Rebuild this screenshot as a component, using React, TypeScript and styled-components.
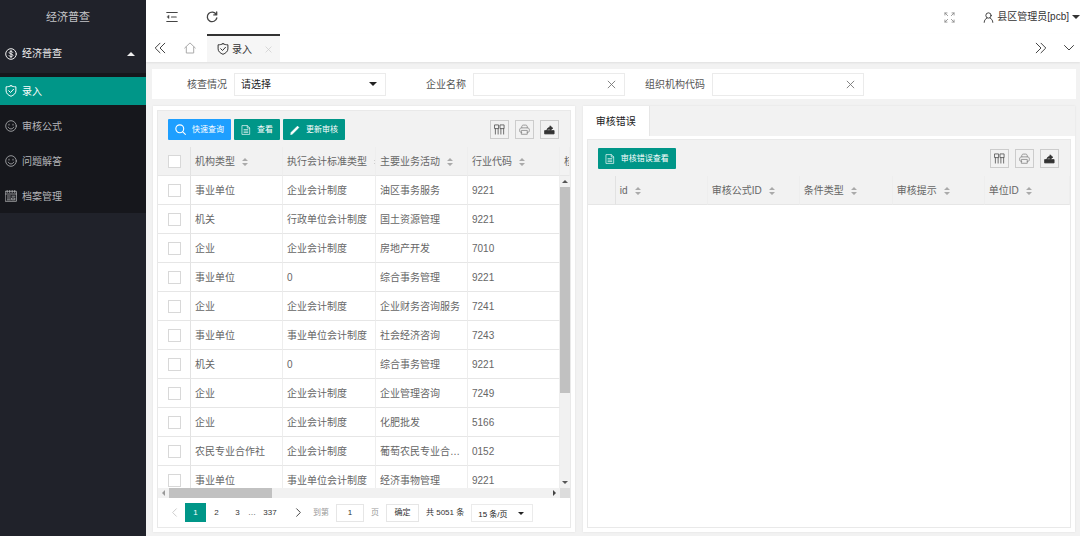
import React from "react";
import styled, { createGlobalStyle, css } from "styled-components";

const GlobalStyle = createGlobalStyle`
  * { box-sizing: border-box; }
  body {
    margin: 0;
    background: #f2f2f2;
    color: #555;
    font: 10px/16px "Liberation Sans", "Noto Sans CJK SC", sans-serif;
  }
  a { color: inherit; text-decoration: none; }
  button, input, select { font: inherit; color: inherit; margin: 0; padding: 0; border: 0; background: none; border-radius: 0; }
  svg { display: block; flex: none; }
`;

/* ---------- icons ---------- */

type IconProps = { size?: number; color?: string; width?: number; children?: React.ReactNode };

const Icon = ({ size = 12, color = "currentColor", width = 1, children }: IconProps) => (
  <svg width={size} height={size} viewBox="0 0 12 12" fill="none" stroke={color} strokeWidth={width} strokeLinecap="round" strokeLinejoin="round" aria-hidden="true">
    {children}
  </svg>
);

const DollarIcon = () => (
  <Icon>
    <circle cx="6" cy="6" r="5.3" />
    <path d="M7.8 4.4C7.5 3.7 6.9 3.4 6 3.4c-1 0-1.8.5-1.8 1.3C4.200 6.400 7.900 5.500 7.900 7.300c0 .8-.8 1.300-1.900 1.300-1 0-1.700-.4-2-1.100M6 2.400v7.200" />
  </Icon>
);
const ShieldIcon = ({ size }: { size?: number }) => (
  <Icon size={size}>
    <path d="M6 .7c1.500.8 3 1.100 4.900 1.100v4.100c0 2.600-2.200 4.300-4.900 5.400C3.300 10.200 1.100 8.500 1.100 5.900V1.800C3 1.800 4.500 1.500 6 .7zM3.700 5.700l1.800 1.800 3-3.200" />
  </Icon>
);
const SmileIcon = () => (
  <Icon width={0.8}>
    <circle cx="6" cy="6" r="5.300" />
    <path d="M4 4.200v.9M8 4.200v.9M3.300 7.200c.6 1.100 1.500 1.700 2.700 1.700s2.100-.6 2.700-1.700" />
  </Icon>
);
const ArchiveIcon = () => (
  <Icon width={0.8}>
    <path d="M.6 1.300h10.800v10H.6zM.6 4h10.800M2.200.5v2M4.700.5v2M7.200.5v2M9.700.5v2M2.300 6h3M2.300 8h3M2.300 9.800h3M7 6.200h2.800M7 8h2.800v1.800H7z" />
  </Icon>
);
const ShrinkIcon = () => (
  <Icon width={1.200}>
    <path d="M.8 1.500h10.400M5.500 6h4.700M.8 10.500h10.400" />
    <path d="M3 4.500v3L1.200 6z" fill="currentColor" strokeWidth={0.500} />
  </Icon>
);
const RefreshIcon = () => (
  <Icon width={1.300}>
    <path d="M10.300 3.500A4.800 4.800 0 1 0 10.800 7M10.700 1v2.900H7.800" />
  </Icon>
);
const ExpandIcon = () => (
  <Icon size={11} color="#888" width={0.900}>
    <path d="M1 3.300V1h2.300M1 1l3 3M8.700 1H11v2.300M11 1L8 4M1 8.700V11h2.300M1 11l3-3M8.700 11H11V8.700M11 11L8 8" />
  </Icon>
);
const UserIcon = () => (
  <Icon size={11}>
    <circle cx="6" cy="3.800" r="2.900" />
    <path d="M1.300 11.300c.1-2.600 1.500-4 3-4.600M10.700 11.300c-.1-2.600-1.500-4-3-4.600" />
  </Icon>
);
const DoubleLeftIcon = () => (
  <Icon><path d="M6 1.200L1.200 6 6 10.800M10.800 1.200L6 6l4.800 4.800" /></Icon>
);
const DoubleRightIcon = () => (
  <Icon><path d="M6 1.200L10.800 6 6 10.800M1.200 1.200L6 6l-4.800 4.800" /></Icon>
);
const DownIcon = () => (
  <Icon><path d="M1.500 3.500L6 8l4.500-4.500" /></Icon>
);
const HomeIcon = () => (
  <Icon color="#aaa"><path d="M.7 6L6 .9 11.300 6M2.300 5v6h7.400V5" /></Icon>
);
const CloseIcon = ({ size = 9, color = "#777" }: { size?: number; color?: string }) => (
  <Icon size={size} color={color} width={1.200}><path d="M1.500 1.500l9 9M10.500 1.500l-9 9" /></Icon>
);
const SearchIcon = () => (
  <Icon width={1.200} size={11}>
    <circle cx="5.200" cy="5.200" r="4.300" />
    <path d="M8.500 8.500l2.800 2.800" />
  </Icon>
);
const FileIcon = () => (
  <Icon size={10} width={0.800}>
    <path d="M1.600.7h6l2.800 2.800v7.800H1.600zM7.500.8v2.800h2.800M3.600 5.500h4.600M3.600 7.300h4.600M3.600 9.100h4.600" />
  </Icon>
);
const PencilIcon = () => (
  <Icon size={10}>
    <path d="M1 11l.6-2.200L9 1.400l1.600 1.600L3.200 10.400z" fill="currentColor" />
  </Icon>
);
const ColumnsIcon = () => (
  <Icon size={11} color="#555" width={0.900}>
    <path d="M1 1h4v4H1zM7 1h4v4H7zM1.500 5v6M4.500 5v6M7.500 5v6M10.500 5v6" />
  </Icon>
);
const PrinterIcon = () => (
  <Icon size={11} color="#888" width={0.900}>
    <path d="M3 4.200V3c0-1.100.8-1.800 1.800-1.800h2.400C8.200 1.200 9 1.900 9 3v1.200M3 9.300C1.500 9.300.7 8.500.7 7.200V6.300c0-1.300.9-2.100 2.100-2.100h6.400c1.200 0 2.100.8 2.100 2.100v.9c0 1.300-.8 2.100-2.300 2.100M3 7h6v4.200H3z" />
  </Icon>
);
const ExportIcon = () => (
  <Icon size={11} color="#333" width={0.900}>
    <path d="M1 7.200h10v3.600H1z" fill="#333" />
    <path d="M3.200 6.800c.1-2 1.300-3 3.300-3V2L9.600 4.600 6.500 7V5.500c-1.500 0-2.500.3-3.300 1.300z" fill="#333" />
  </Icon>
);
const Caret = ({ up, size = 8 }: { up?: boolean; size?: number }) => (
  <svg width={size} height={size / 2} viewBox="0 0 8 4" aria-hidden="true">
    <path d={up ? "M0 4l4-4 4 4z" : "M0 0h8L4 4z"} fill="currentColor" />
  </svg>
);
const SortIcon = () => (
  <svg width="6" height="8" viewBox="0 0 6 8" fill="#aaa" aria-hidden="true">
    <path d="M0 3l3-3 3 3zM0 5h6L3 8z" />
  </svg>
);
const ChevronIcon = ({ right, color }: { right?: boolean; color: string }) => (
  <Icon size={9} color={color} width={1.300}><path d={right ? "M3.500 1l5 5-5 5" : "M8.500 1l-5 5 5 5"} /></Icon>
);

/* ---------- page frame ---------- */

const Page = styled.div`
  display: flex;
  height: 100vh;
  min-height: 400px;
`;
const Sidebar = styled.aside`
  flex: none;
  width: 146px;
  background: #20222a;
  color: #c4c5c8;
`;
const Brand = styled.h1`
  margin: 0;
  padding-right: 10px;
  font-size: 11px;
  font-weight: 400;
  line-height: 34px;
  text-align: center;
`;
const navLine = css`
  display: flex;
  align-items: center;
  gap: 5px;
  padding: 0 11px 0 5px;
`;
const NavGroup = styled.a`
  ${navLine}
  height: 39px;
  color: #f0f0f0;
`;
const NavLabel = styled.span`
  flex: 1;
  padding-top: 1px;
`;
const SubMenu = styled.ul`
  margin: 0;
  padding: 0;
  list-style: none;
  background: #16171c;
`;
const SubItem = styled.li`
  padding: 4px 0 3px;
`;
const SubLink = styled.a<{ $active?: boolean }>`
  ${navLine}
  height: 28px;
  background: ${(p) => (p.$active ? "#009688" : "transparent")};
  color: ${(p) => (p.$active ? "#fff" : "#b4b5b8")};
`;
const Main = styled.div`
  flex: 1;
  min-width: 0;
  display: flex;
  flex-direction: column;
`;
const TopBar = styled.header`
  display: flex;
  align-items: center;
  height: 34px;
  padding-left: 20px;
  background: #fff;
  color: #333;
`;
const IconButton = styled.button`
  display: flex;
  justify-content: center;
  align-items: center;
  color: #444;
  cursor: pointer;
`;
const TopIcons = styled.div`
  flex: 1;
  display: flex;
  gap: 28px;
`;
const UserMenu = styled.button`
  display: flex;
  align-items: center;
  gap: 3px;
  margin-left: 28px;
`;
const TabBar = styled.nav`
  display: flex;
  align-items: center;
  height: 28px;
  padding: 0 5px 0 8px;
  background: #fff;
  box-shadow: 0 1px 2px rgba(0, 0, 0, 0.08);
`;
const TabBarLeft = styled.div`
  flex: 1;
  display: flex;
  align-items: center;
  gap: 18px;
`;
const TabBarRight = styled.div`
  display: flex;
  gap: 16px;
`;
const PageTab = styled.div`
  display: flex;
  align-items: center;
  gap: 3px;
  width: 73px;
  height: 28px;
  margin-left: -7px;
  padding: 0 8px 0 10px;
  border-top: 2px solid #333;
  background: #f6f6f6;
  color: #333;
`;
const Content = styled.main`
  flex: 1;
  min-height: 0;
  display: flex;
  flex-direction: column;
  gap: 7px;
  padding: 7px 4px 4px 6px;
`;

/* ---------- search form ---------- */

const SearchForm = styled.form`
  display: flex;
  align-items: center;
  gap: 20px;
  height: 30px;
  padding-left: 15px;
  background: #fff;
`;
const Field = styled.div`
  display: flex;
  align-items: center;
  gap: 7px;
`;
const FieldLabel = styled.label`
  width: 60px;
  padding-top: 2px;
  text-align: right;
`;
const Control = styled.div<{ $width: number; $height: number }>`
  display: grid;
  grid-template-columns: 1fr auto;
  align-items: center;
  width: ${(p) => p.$width}px;
  height: ${(p) => p.$height}px;
  padding-right: 8px;
  border: 1px solid #ebebeb;
  background: #fff;
  color: #222;
  > input, > select {
    grid-area: 1 / 1 / 2 / 3;
    width: 100%;
    height: 100%;
    padding: 2px 0 0 6px;
    appearance: none;
    outline: 0;
  }
  > svg, > button { grid-area: 1 / 2; pointer-events: none; }
`;

/* ---------- panels ---------- */

const Panels = styled.div`
  flex: 1;
  min-height: 0;
  display: flex;
  gap: 8px;
  padding: 0 1px;
`;
const Panel = styled.section<{ $grow: number }>`
  flex: ${(p) => p.$grow} 1 0;
  min-width: 0;
  display: flex;
  flex-direction: column;
  background: #fff;
  box-shadow: 0 0 2px rgba(0, 0, 0, 0.08);
`;
const PanelTabs = styled.div`
  display: flex;
  height: 30px;
  background: #f2f2f2;
`;
const PanelTab = styled.button`
  padding: 2px 13px 0;
  background: #fff;
  border-right: 1px solid #e6e6e6;
  color: #222;
`;
const GridBox = styled.div<{ $top: number }>`
  flex: 1;
  min-height: 0;
  display: flex;
  flex-direction: column;
  margin: ${(p) => p.$top}px 4px 4px;
  border: 1px solid #e9e9e9;
`;
const Toolbar = styled.div`
  display: flex;
  justify-content: space-between;
  align-items: center;
  height: 36px;
  padding: 0 11px 0 10px;
  background: #f2f2f2;
`;
const ButtonRow = styled.div<{ $gap: number }>`
  display: flex;
  gap: ${(p) => p.$gap}px;
`;
const ActionButton = styled.button<{ $blue?: boolean }>`
  display: flex;
  align-items: center;
  gap: 6px;
  height: 21px;
  padding: 1px 7px 0;
  border-radius: 1px;
  background: ${(p) => (p.$blue ? "#1e9fff" : "#009688")};
  color: #fff;
  font-size: 8px;
  cursor: pointer;
`;
const ToolButton = styled(IconButton)`
  width: 19px;
  height: 19px;
  border: 1px solid #ccc;
`;

/* ---------- data tables ---------- */

const DataTable = styled.table`
  table-layout: fixed;
  width: 100%;
  border-spacing: 0;
  color: #666;
  th, td {
    height: 29px;
    padding: 2px 3px 0 4px;
    border-right: 1px solid #eee;
    border-bottom: 1px solid #e6e6e6;
    font-weight: 400;
    text-align: left;
    white-space: nowrap;
    overflow: hidden;
    text-overflow: ellipsis;
  }
  th { background: #f2f2f2; padding-right: 0; text-overflow: clip; }
  th:first-child, td:first-child { padding: 0 0 0 10px; border-right-color: #e2e2e2; }
`;
const SortHead = styled.span`
  display: flex;
  align-items: center;
  gap: 7px;
`;
const Check = styled.input`
  display: block;
  appearance: none;
  width: 13px;
  height: 13px;
  border: 1px solid #d8d8d8;
  background: #fff;
`;
const HeadClip = styled.div`
  flex: none;
  overflow: hidden;
`;
const BodyRow = styled.div`
  flex: 1;
  min-height: 0;
  display: flex;
`;
const BodyClip = styled.div`
  flex: 1;
  min-width: 0;
  overflow: hidden;
`;
const ScrollTrack = styled.div<{ $vertical?: boolean }>`
  display: flex;
  flex: ${(p) => (p.$vertical ? "none" : "1")};
  flex-direction: ${(p) => (p.$vertical ? "column" : "row")};
  align-items: center;
  justify-content: space-between;
  ${(p) => (p.$vertical ? "width: 10px; padding: 4px 0;" : "height: 10px; padding: 0 4px;")}
  background: #f1f1f1;
  color: #555;
`;
const ScrollLane = styled.div<{ $vertical?: boolean }>`
  flex: 1;
  align-self: stretch;
  margin: ${(p) => (p.$vertical ? "4px 0" : "0 4px")};
`;
const Thumb = styled.div<{ $vertical?: boolean }>`
  background: #c1c1c1;
  ${(p) => (p.$vertical ? "height: 71%;" : "width: 27%; height: 100%;")}
`;
const ScrollFoot = styled.div`
  display: flex;
  flex: none;
`;
const ScrollCorner = styled.div`
  width: 10px;
  background: #dcdcdc;
`;

/* ---------- pager ---------- */

const Pager = styled.div`
  display: flex;
  align-items: center;
  flex: none;
  height: 29px;
  padding-left: 6px;
  font-size: 8px;
  color: #333;
`;
const PageButton = styled.button<{ $active?: boolean; $wide?: boolean }>`
  display: flex;
  justify-content: center;
  align-items: center;
  width: ${(p) => (p.$wide ? 28 : 21)}px;
  height: 19px;
  background: ${(p) => (p.$active ? "#009688" : "transparent")};
  color: ${(p) => (p.$active ? "#fff" : "#333")};
`;
const Jump = styled.div`
  display: flex;
  align-items: center;
  gap: 7px;
  margin-left: 4px;
`;
const NextWrap = styled.div`
  margin-left: 4px;
`;
const Muted = styled.label`
  color: #999;
`;
const Ellipsis = styled.span`
  width: 8px;
  text-align: center;
`;
const PageInput = styled.input`
  width: 28px;
  height: 18px;
  border: 1px solid #e6e6e6;
  text-align: center;
`;
const ConfirmButton = styled.button`
  width: 33px;
  height: 18px;
  border: 1px solid #e6e6e6;
`;

const navItems = [
  { label: "录入", icon: <ShieldIcon />, active: true },
  { label: "审核公式", icon: <SmileIcon /> },
  { label: "问题解答", icon: <SmileIcon /> },
  { label: "档案管理", icon: <ArchiveIcon /> },
];

const rows = [
  ["事业单位", "企业会计制度", "油区事务服务", "9221"],
  ["机关", "行政单位会计制度", "国土资源管理", "9221"],
  ["企业", "企业会计制度", "房地产开发", "7010"],
  ["事业单位", "0", "综合事务管理", "9221"],
  ["企业", "企业会计制度", "企业财务咨询服务", "7241"],
  ["事业单位", "事业单位会计制度", "社会经济咨询", "7243"],
  ["机关", "0", "综合事务管理", "9221"],
  ["企业", "企业会计制度", "企业管理咨询", "7249"],
  ["企业", "企业会计制度", "化肥批发", "5166"],
  ["农民专业合作社", "企业会计制度", "葡萄农民专业合…", "0152"],
  ["事业单位", "事业单位会计制度", "经济事物管理", "9221"],
];

const Cols = ({ widths }: { widths: number[] }) => (
  <colgroup>
    {widths.map((w, i) => <col key={i} width={w} />)}
    <col />
  </colgroup>
);

const HeadCells = ({ names }: { names: string[] }) => (
  <>
    {names.map((name) => (
      <th key={name} scope="col"><SortHead>{name}<SortIcon /></SortHead></th>
    ))}
  </>
);

const GridTools = () => (
  <ButtonRow $gap={6}>
    <ToolButton type="button" aria-label="筛选列"><ColumnsIcon /></ToolButton>
    <ToolButton type="button" aria-label="打印"><PrinterIcon /></ToolButton>
    <ToolButton type="button" aria-label="导出"><ExportIcon /></ToolButton>
  </ButtonRow>
);

const TextField = ({ id, label }: { id: string; label: string }) => (
  <Field>
    <FieldLabel htmlFor={id}>{label}</FieldLabel>
    <Control $width={152} $height={23}>
      <input id={id} type="text" />
      <IconButton type="button" aria-label="清空"><CloseIcon /></IconButton>
    </Control>
  </Field>
);

const leftCols = [33, 92, 93, 92, 92];
const rightCols = [28, 92, 92, 93, 92];

export default function App() {
  return (
    <Page>
      <GlobalStyle />
      <Sidebar>
        <Brand>经济普查</Brand>
        <NavGroup href="#">
          <DollarIcon />
          <NavLabel>经济普查</NavLabel>
          <Caret up />
        </NavGroup>
        <SubMenu>
          {navItems.map((item) => (
            <SubItem key={item.label}>
              <SubLink href="#" $active={item.active}>{item.icon}<NavLabel>{item.label}</NavLabel></SubLink>
            </SubItem>
          ))}
        </SubMenu>
      </Sidebar>
      <Main>
        <TopBar>
          <TopIcons>
            <IconButton type="button" aria-label="收起菜单"><ShrinkIcon /></IconButton>
            <IconButton type="button" aria-label="刷新"><RefreshIcon /></IconButton>
          </TopIcons>
          <IconButton type="button" aria-label="全屏"><ExpandIcon /></IconButton>
          <UserMenu type="button"><UserIcon />县区管理员[pcb]<Caret /></UserMenu>
        </TopBar>
        <TabBar>
          <TabBarLeft>
            <IconButton type="button" aria-label="向左"><DoubleLeftIcon /></IconButton>
            <IconButton type="button" aria-label="主页"><HomeIcon /></IconButton>
            <PageTab>
              <ShieldIcon />
              <NavLabel>录入</NavLabel>
              <IconButton type="button" aria-label="关闭"><CloseIcon size={7} color="#ccc" /></IconButton>
            </PageTab>
          </TabBarLeft>
          <TabBarRight>
            <IconButton type="button" aria-label="向右"><DoubleRightIcon /></IconButton>
            <IconButton type="button" aria-label="更多"><DownIcon /></IconButton>
          </TabBarRight>
        </TabBar>
        <Content>
          <SearchForm>
            <Field>
              <FieldLabel htmlFor="status">核查情况</FieldLabel>
              <Control $width={152} $height={23}>
                <select id="status"><option>请选择</option></select>
                <Caret />
              </Control>
            </Field>
            <TextField id="company" label="企业名称" />
            <TextField id="orgcode" label="组织机构代码" />
          </SearchForm>
          <Panels>
            <Panel $grow={6}>
              <GridBox $top={4}>
                <Toolbar>
                  <ButtonRow $gap={3}>
                    <ActionButton type="button" $blue><SearchIcon />快速查询</ActionButton>
                    <ActionButton type="button"><FileIcon />查看</ActionButton>
                    <ActionButton type="button"><PencilIcon />更新审核</ActionButton>
                  </ButtonRow>
                  <GridTools />
                </Toolbar>
                <HeadClip>
                  <DataTable>
                    <Cols widths={leftCols} />
                    <thead>
                      <tr>
                        <th><Check type="checkbox" aria-label="全选" /></th>
                        <HeadCells names={["机构类型", "执行会计标准类型", "主要业务活动", "行业代码", "核"]} />
                      </tr>
                    </thead>
                  </DataTable>
                </HeadClip>
                <BodyRow>
                  <BodyClip>
                    <DataTable>
                      <Cols widths={leftCols} />
                      <tbody>
                        {rows.map((row, i) => (
                          <tr key={i}>
                            <td><Check type="checkbox" aria-label={`选择第${i + 1}行`} /></td>
                            {row.map((cell, j) => <td key={j}>{cell}</td>)}
                            <td />
                          </tr>
                        ))}
                      </tbody>
                    </DataTable>
                  </BodyClip>
                  <ScrollTrack $vertical>
                    <Caret up size={6} />
                    <ScrollLane $vertical><Thumb $vertical /></ScrollLane>
                    <Caret size={6} />
                  </ScrollTrack>
                </BodyRow>
                <ScrollFoot>
                  <ScrollTrack>
                    <svg width="3" height="6" viewBox="0 0 3 6" fill="#999" aria-hidden="true"><path d="M3 0v6L0 3z" /></svg>
                    <ScrollLane><Thumb /></ScrollLane>
                    <svg width="3" height="6" viewBox="0 0 3 6" fill="#444" aria-hidden="true"><path d="M0 0v6l3-3z" /></svg>
                  </ScrollTrack>
                  <ScrollCorner />
                </ScrollFoot>
                <Pager>
                  <PageButton type="button" aria-label="上一页"><ChevronIcon color="#ccc" /></PageButton>
                  <PageButton type="button" $active>1</PageButton>
                  <PageButton type="button">2</PageButton>
                  <PageButton type="button">3</PageButton>
                  <Ellipsis>…</Ellipsis>
                  <PageButton type="button" $wide>337</PageButton>
                  <NextWrap>
                    <PageButton type="button" aria-label="下一页"><ChevronIcon right color="#444" /></PageButton>
                  </NextWrap>
                  <Jump>
                    <Muted htmlFor="page">到第</Muted>
                    <PageInput id="page" type="text" defaultValue="1" />
                    <Muted htmlFor="page">页</Muted>
                    <ConfirmButton type="button">确定</ConfirmButton>
                    <span>共 5051 条</span>
                    <Control $width={62} $height={18}>
                      <select aria-label="每页条数"><option>15 条/页</option></select>
                      <Caret size={6} />
                    </Control>
                  </Jump>
                </Pager>
              </GridBox>
            </Panel>
            <Panel $grow={7}>
              <PanelTabs>
                <PanelTab type="button">审核错误</PanelTab>
              </PanelTabs>
              <GridBox $top={3}>
                <Toolbar>
                  <ActionButton type="button"><FileIcon />审核错误查看</ActionButton>
                  <GridTools />
                </Toolbar>
                <HeadClip>
                  <DataTable>
                    <Cols widths={rightCols} />
                    <thead>
                      <tr>
                        <th />
                        <HeadCells names={["id", "审核公式ID", "条件类型", "审核提示", "单位ID"]} />
                      </tr>
                    </thead>
                  </DataTable>
                </HeadClip>
              </GridBox>
            </Panel>
          </Panels>
        </Content>
      </Main>
    </Page>
  );
}
